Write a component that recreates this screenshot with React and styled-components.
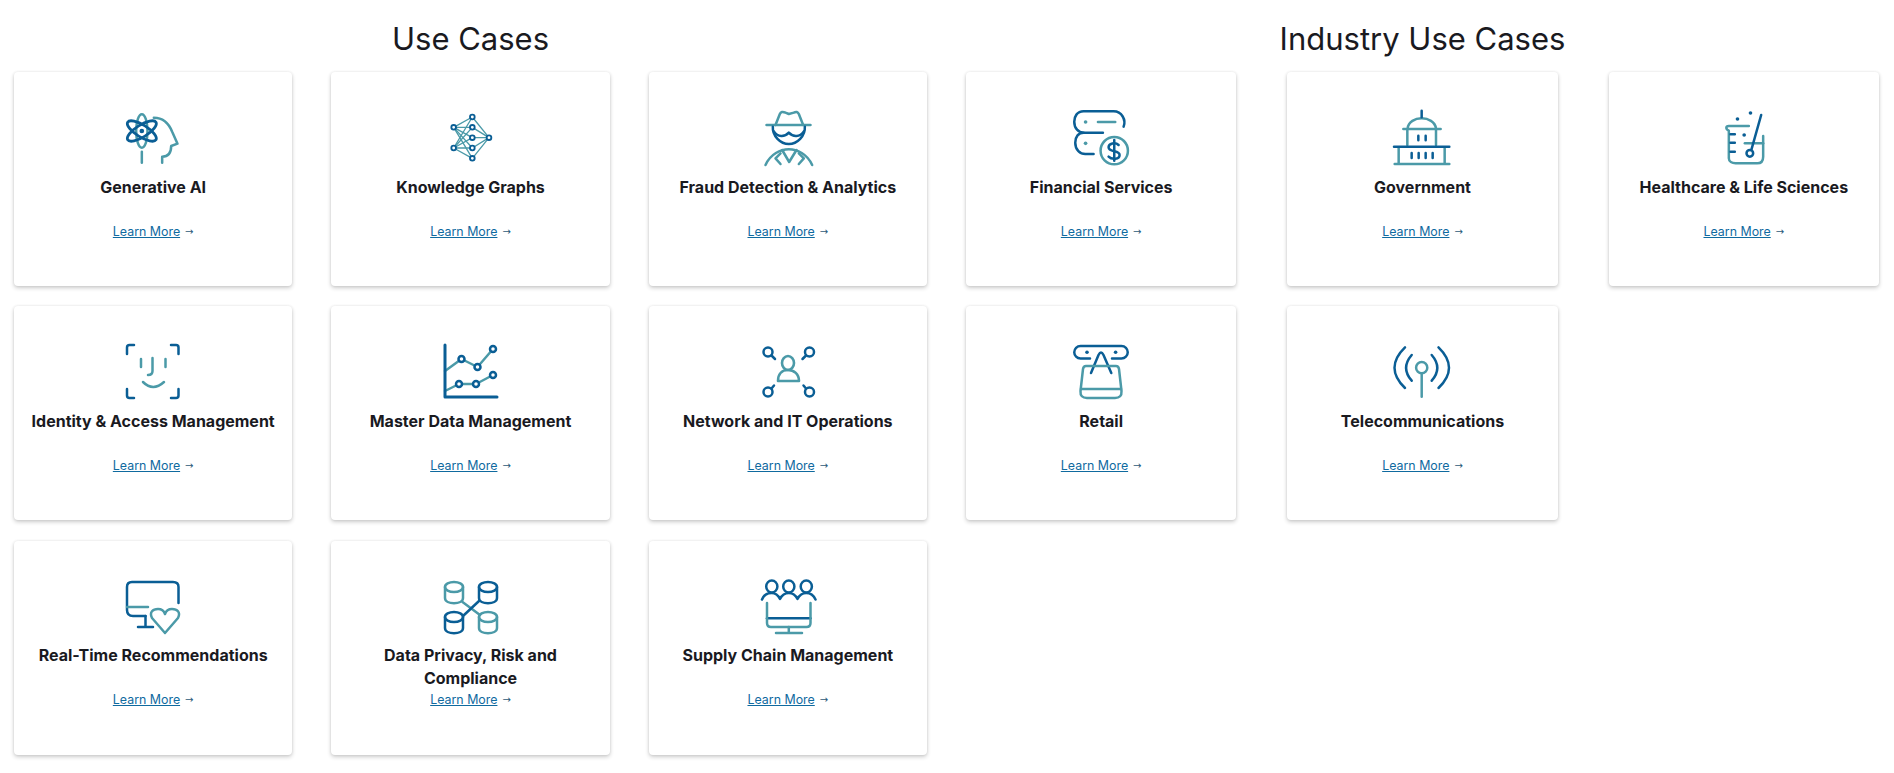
import React from "react";
import styled, { createGlobalStyle } from "styled-components";

const Global = createGlobalStyle`
  html, body { margin: 0; padding: 0; background: #fff; }
`;

const Page = styled.main`
  display: grid;
  grid-template-columns: 947px 947px;
  width: 1894px;
  height: 773px;
  overflow: hidden;
`;

const Section = styled.section`
  padding: 16px ${(p) => p.$right}px 0 ${(p) => p.$left}px;
`;

const Heading = styled.h2`
  margin: 0 0 10px;
  text-align: center;
  font: 400 31px/46px Inter, "Noto Sans", sans-serif;
  color: #1a1a1f;
`;

const Grid = styled.div`
  display: grid;
  grid-template-columns: repeat(3, 1fr);
  column-gap: ${(p) => p.$gap}px;
  row-gap: 20.4px;
`;

const Card = styled.article`
  height: 214px;
  box-sizing: border-box;
  padding-top: 36px;
  display: flex;
  flex-direction: column;
  align-items: center;
  background: #fff;
  border-radius: 4px;
  box-shadow: 0 2px 4px rgba(0, 0, 0, 0.2), 0 0 3px rgba(0, 0, 0, 0.08);
`;

const Glyph = styled.svg`
  display: block;
  flex: none;
  width: 64px;
  height: 64px;
  fill: none;
  stroke-linecap: round;
  stroke-linejoin: round;
`;

const Dark = styled.g`
  stroke: #0a5e95;
`;
const Teal = styled.g`
  stroke: #4b9aa8;
`;
const DarkFill = styled.g`
  fill: #0a5e95;
  stroke: none;
`;
const TealFill = styled.g`
  fill: #4b9aa8;
  stroke: none;
`;
const Node = styled.g`
  stroke: #0a5e95;
  fill: #fff;
`;

const CardTitle = styled.h3`
  margin: 3.5px 0 0;
  height: 46px;
  padding: 0 14px;
  text-align: center;
  font: 700 16px/23px Inter, "Noto Sans", sans-serif;
  color: #1a1a1f;
`;

const LinkRow = styled.div`
  display: flex;
  align-items: center;
  gap: 5px;
  height: 20px;
  font: 400 12.4px/20px Inter, "Noto Sans", sans-serif;
`;

const MoreLink = styled.a`
  color: #0f6a9f;
  text-decoration: underline;
`;

const Arrow = styled.span`
  font: 400 10px/20px "DejaVu Sans", sans-serif;
  color: #2c5a78;
`;

const Gen = () => (
  <Glyph viewBox="64.5 54 192 192">
    <Teal strokeWidth="7.5">
      <ellipse cx="127" cy="123" rx="17" ry="50" />
      <path d="M127 185V218" />
      <path d="M163 83C195 83 210 105 218 125L234 161L215 168C215 190 205 200 188 200V218" />
    </Teal>
    <Dark strokeWidth="8.5">
      <ellipse cx="127" cy="123" rx="50" ry="18" transform="rotate(32 127 123)" />
      <ellipse cx="127" cy="123" rx="50" ry="18" transform="rotate(-32 127 123)" />
    </Dark>
    <DarkFill>
      <circle cx="127" cy="123" r="7" />
    </DarkFill>
  </Glyph>
);

const kgLeft = [[101, 112], [101, 174]];
const kgMid = [[157, 81], [157, 112], [157, 143], [157, 174], [157, 205]];
const kgRight = [207, 143];

const Knowledge = () => (
  <Glyph viewBox="54 54 192 192">
    <Teal strokeWidth="4">
      {kgLeft.flatMap((a, i) =>
        kgMid.map((b, j) => <path key={`${i}-${j}`} d={`M${a[0]} ${a[1]}L${b[0]} ${b[1]}`} />)
      )}
      {kgMid.map((b, j) => (
        <path key={j} d={`M${b[0]} ${b[1]}L${kgRight[0]} ${kgRight[1]}`} />
      ))}
    </Teal>
    <Node strokeWidth="5.5">
      {[...kgLeft, ...kgMid, kgRight].map((c, i) => (
        <circle key={i} cx={c[0]} cy={c[1]} r="7" />
      ))}
    </Node>
  </Glyph>
);

const Fraud = () => (
  <Glyph viewBox="76.5 54 192 192">
    <Teal strokeWidth="7.5">
      <path d="M108 105H240" />
      <path d="M135 105L148 72Q152 62 165 68L175 72L190 68Q200 62 205 72L218 105" />
      <path d="M105 225C120 192 150 178 175 178C200 178 230 192 245 225" />
      <path d="M155 180L176 216L198 180" />
      <path d="M150 190L135 205L150 222" />
      <path d="M205 190L220 205L205 222" />
    </Teal>
    <Dark strokeWidth="7.5">
      <path d="M127 110C125 138 150 162 175 162C200 162 225 138 223 110" />
      <path d="M130 124C142 142 162 142 175 128C188 142 208 142 220 124" />
    </Dark>
  </Glyph>
);

const Finance = () => (
  <Glyph viewBox="56.25 54 192 192">
    <Dark strokeWidth="7.5">
      <path d="M220 110C228 90 215 64 190 64H100C80 64 72 80 72 95C72 115 85 128 100 128H158" />
      <path d="M100 128C85 128 75 140 75 158C75 180 90 192 105 192H130" />
      <path d="M205 165C195 155 175 160 175 172C175 188 208 180 208 195C208 208 185 210 175 200" />
      <path d="M192 150V212" />
    </Dark>
    <Teal strokeWidth="7.5">
      <path d="M143 96H195" />
      <circle cx="192" cy="182" r="41" />
    </Teal>
    <TealFill>
      <circle cx="106" cy="96" r="5.5" />
      <circle cx="106" cy="160" r="5.5" />
    </TealFill>
  </Glyph>
);

const Gov = () => (
  <Glyph viewBox="60 54 192 192">
    <Teal strokeWidth="7.5">
      <path d="M113 115C115 95 135 85 155 85C175 85 195 95 198 115" />
      <path d="M100 117H212M112 117V165M198 117V165M86 172V222M224 172V222M74 222H238" />
    </Teal>
    <Dark strokeWidth="7.5">
      <path d="M155 62V82M72 170H238" />
      <path d="M145 137V151M167 137V151M125 189V204M146 189V204M167 189V204M188 189V204" />
    </Dark>
  </Glyph>
);

const Health = () => (
  <Glyph viewBox="64.5 54 192 192">
    <Teal strokeWidth="7.5">
      <path d="M175 108H115C105 108 105 118 115 122V205C115 215 125 220 135 220H200C212 220 218 212 218 200V138" />
      <path d="M163 160H218" />
    </Teal>
    <Dark strokeWidth="7.5">
      <path d="M212 75L183 178" />
      <circle cx="178" cy="190" r="10" />
      <path d="M120 133H133M120 158H133M120 185H133" />
    </Dark>
    <DarkFill>
      <circle cx="141" cy="87" r="5.5" />
      <circle cx="180" cy="69" r="5.5" />
      <circle cx="161" cy="135" r="5.5" />
    </DarkFill>
  </Glyph>
);

const Face = () => (
  <Glyph viewBox="0 0 64 64">
    <Dark strokeWidth="2.5">
      <path d="M6 12V5.5Q6 3 8.5 3H13" />
      <path d="M50 3H55Q57.5 3 57.5 5.5V12" />
      <path d="M6 47V53.5Q6 56 8.5 56H13" />
      <path d="M50 56H55Q57.5 56 57.5 53.5V47" />
    </Dark>
    <Teal strokeWidth="2.5">
      <path d="M20 17V25M44.5 17V25" />
      <path d="M31.5 16V29Q31.5 33 27 33" />
      <path d="M22 40Q32 50 43 40" />
    </Teal>
  </Glyph>
);

const Chart = () => (
  <Glyph viewBox="0 0 64 64">
    <Teal strokeWidth="2.5">
      <path d="M7 29L23.5 17L39.5 25L55 7" />
      <path d="M7 49L21 42H38L55 33" />
    </Teal>
    <Dark strokeWidth="3">
      <path d="M7 3V55H59" />
    </Dark>
    <Node strokeWidth="2.5">
      <circle cx="23.5" cy="17" r="3" />
      <circle cx="39.5" cy="25" r="3" />
      <circle cx="55" cy="7" r="3" />
      <circle cx="21" cy="42" r="3" />
      <circle cx="38" cy="42" r="3" />
      <circle cx="55" cy="33" r="3" />
    </Node>
  </Glyph>
);

const Network = () => (
  <Glyph viewBox="0 0 64 64">
    <Dark strokeWidth="2.5">
      <circle cx="12" cy="10" r="4.5" />
      <circle cx="53.5" cy="10" r="4.5" />
      <circle cx="12" cy="50" r="4.5" />
      <circle cx="53.5" cy="50" r="4.5" />
      <path d="M15.5 13.5L19 17M50 13.5L46.5 17M15.5 46.5L18 43.5M50 46.5L47.5 43.5" />
    </Dark>
    <Teal strokeWidth="2.6">
      <ellipse cx="32" cy="21" rx="6" ry="7" />
      <path d="M22 39C22 32 26 28 32 28C38 28 43 32 43 39Z" />
    </Teal>
  </Glyph>
);

const Recs = () => (
  <Glyph viewBox="0 0 64 64">
    <Dark strokeWidth="2.5">
      <path d="M57.5 26V10Q57.5 5 52 5H11Q6 5 6 10V33Q6 39 12 39H24.5" />
      <path d="M24.5 39V50M17 50H32" />
    </Dark>
    <Teal strokeWidth="2.5">
      <path d="M6 30H27" />
      <path d="M44 56L31 41C28 35 32 32 37 32C41 32 43 34 44 37C45 34 48 32 51 32C56 32 60 35 57 41Z" />
    </Teal>
  </Glyph>
);

const Cylinder = ({ x, y }) => (
  <>
    <ellipse cx={x} cy={y + 5} rx="9" ry="5" />
    <path d={`M${x - 9} ${y + 5}V${y + 16}C${x - 9} ${y + 23} ${x + 9} ${y + 23} ${x + 9} ${y + 16}V${y + 5}`} />
  </>
);

const Privacy = () => (
  <Glyph viewBox="0 0 64 64">
    <Teal strokeWidth="2.5">
      <Cylinder x={16} y={5} />
      <Cylinder x={50} y={35} />
      <path d="M24.5 25L42 38" />
    </Teal>
    <Dark strokeWidth="2.5">
      <Cylinder x={50} y={5} />
      <Cylinder x={16} y={35} />
      <path d="M41 24L25 39" />
    </Dark>
  </Glyph>
);

const Supply = () => (
  <Glyph viewBox="0 0 64 64">
    <Dark strokeWidth="2.5">
      <ellipse cx="15.8" cy="9.5" rx="5.6" ry="6" />
      <ellipse cx="32.8" cy="9.5" rx="5.6" ry="6" />
      <ellipse cx="50.3" cy="9.5" rx="5.6" ry="6" />
      <path d="M6 22.5C8 17 12 16 15.8 16C19.5 16 22 18 24 22C26 18 29 16 32.8 16C36.5 16 39.5 18 41.5 22C43.5 18 46.5 16 50.3 16C54 16 57.5 18 59.5 22.5" />
      <path d="M11 41.3H54.5" />
    </Dark>
    <Teal strokeWidth="2.5">
      <path d="M11 26V46Q11 50 15 50H50.5Q54.5 50 54.5 46V26" />
      <path d="M32.8 50V56M20 56H46" />
    </Teal>
  </Glyph>
);

const Retail = () => (
  <Glyph viewBox="0 0 64 64">
    <Dark strokeWidth="2.5">
      <path d="M43 16.5H52.5A6.2 6.2 0 0 0 52.5 4H11.5A6.2 6.2 0 0 0 11.5 16.5H21" />
      <path d="M22 31L29.5 13Q32 8 34.5 13L42.3 31" />
    </Dark>
    <DarkFill>
      <circle cx="18" cy="10.3" r="1.8" />
      <circle cx="46.6" cy="10.3" r="1.8" />
    </DarkFill>
    <Teal strokeWidth="2.5">
      <path d="M17 24H47Q49.5 24 50 27L52.5 49Q53 56 46 56H18Q11 56 11.5 49L14 27Q14.5 24 17 24Z" />
      <path d="M12 47H52" />
    </Teal>
  </Glyph>
);

const Telecom = () => (
  <Glyph viewBox="0 0 64 64">
    <Teal strokeWidth="2.5">
      <circle cx="31.7" cy="25.7" r="5.6" />
      <path d="M31.7 31.5V54.7" />
    </Teal>
    <Dark strokeWidth="2.5">
      <path d="M21.7 13Q10.5 26 21.7 38.7" />
      <path d="M15 5.3Q-6 25.7 15 46" />
      <path d="M41.7 13Q52.9 26 41.7 38.7" />
      <path d="M48.5 5.3Q69.5 25.7 48.5 46" />
    </Dark>
  </Glyph>
);

const useCases = [
  ["Generative AI", Gen],
  ["Knowledge Graphs", Knowledge],
  ["Fraud Detection & Analytics", Fraud],
  ["Identity & Access Management", Face],
  ["Master Data Management", Chart],
  ["Network and IT Operations", Network],
  ["Real-Time Recommendations", Recs],
  ["Data Privacy, Risk and Compliance", Privacy],
  ["Supply Chain Management", Supply],
];

const industries = [
  ["Financial Services", Finance],
  ["Government", Gov],
  ["Healthcare & Life Sciences", Health],
  ["Retail", Retail],
  ["Telecommunications", Telecom],
];

const Tile = ({ title, icon: Icon }) => (
  <Card>
    <Icon />
    <CardTitle>{title}</CardTitle>
    <LinkRow>
      <MoreLink href="#">Learn More</MoreLink>
      <Arrow>→</Arrow>
    </LinkRow>
  </Card>
);

export default function App() {
  return (
    <Page>
      <Global />
      <Section $left={14} $right={20}>
        <Heading>Use Cases</Heading>
        <Grid $gap={39}>
          {useCases.map(([t, I]) => (
            <Tile key={t} title={t} icon={I} />
          ))}
        </Grid>
      </Section>
      <Section $left={19} $right={15}>
        <Heading>Industry Use Cases</Heading>
        <Grid $gap={51}>
          {industries.map(([t, I]) => (
            <Tile key={t} title={t} icon={I} />
          ))}
        </Grid>
      </Section>
    </Page>
  );
}
